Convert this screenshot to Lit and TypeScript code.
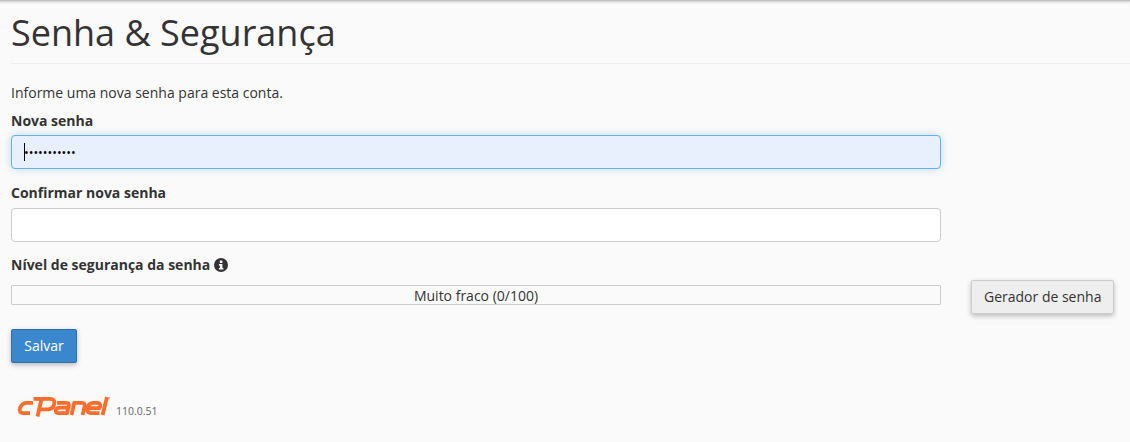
import { LitElement, html, css } from "lit";
import { customElement } from "lit/decorators.js";

@customElement("app-root")
export class AppRoot extends LitElement {
  static styles = css`
    :host {
      display: block;
      width: 1130px;
      height: 442px;
      overflow: hidden;
      background: #fafafa;
      color: #333;
      font-family: "Open Sans", sans-serif;
      font-size: 14px;
      line-height: 20px;
    }
    .page {
      height: 442px;
      box-sizing: border-box;
      padding: 0 0 0 11px;
      background: linear-gradient(#b4b4b4, #d8d8d8 1.5px, #f2f2f2 3px, #fafafa 5px);
    }
    h1 {
      margin: 0;
      padding: 11px 0 9px;
      height: 64px;
      box-sizing: border-box;
      font-size: 36px;
      line-height: 44px;
      font-weight: 400;
      border-bottom: 1px solid #eee;
    }
    .intro {
      margin: 19px 0 0;
    }
    .label {
      display: block;
      margin-top: 8px;
      font-weight: 700;
    }
    .field {
      position: relative;
      width: 930px;
      height: 34px;
      margin-top: 5px;
    }
    .field.first {
      margin-top: 4px;
    }
    input {
      display: block;
      width: 100%;
      height: 100%;
      box-sizing: border-box;
      padding: 6px 12px;
      border: 1px solid #ccc;
      border-radius: 4px;
      background: #fff;
      outline: none;
      font: 14px "Open Sans", sans-serif;
      color: #000;
    }
    input.focus {
      background: #e8f0fe;
      border-color: #66afe9;
      box-shadow: 0 0 8px rgba(102, 175, 233, 0.4);
      font-size: 12.5px;
    }
    .caret {
      position: absolute;
      left: 13px;
      top: 8px;
      width: 1px;
      height: 18px;
      background: #000;
    }
    .second {
      margin-top: 14px;
    }
    .third {
      margin-top: 13px;
    }
    .info {
      display: inline-block;
      vertical-align: -2px;
    }
    .strength {
      display: grid;
      grid-template-columns: 930px auto;
      column-gap: 30px;
      justify-content: start;
      align-items: start;
      height: 34px;
      margin-top: 5px;
    }
    .bar {
      box-sizing: border-box;
      height: 20px;
      margin-top: 5px;
      border: 1px solid #ccc;
      border-radius: 1px;
      background: #fafafa;
      text-align: center;
      line-height: 19px;
    }
    button {
      box-sizing: border-box;
      height: 34px;
      padding: 0 12px;
      border: 1px solid #ccc;
      border-radius: 2px;
      background: #eee;
      color: #333;
      font: 14px/20px "Open Sans", sans-serif;
      box-shadow: 0 2px 5px rgba(0, 0, 0, 0.26);
    }
    .save {
      display: block;
      width: 66px;
      padding: 0;
      margin-top: 15px;
      background: #3a87ce;
      border-color: #2f6fab;
      color: #fff;
    }
    footer {
      display: flex;
      align-items: flex-end;
      gap: 6px;
      margin: 33px 0 0 6px;
    }
    footer svg {
      display: block;
    }
    .ver {
      font-size: 10.5px;
      line-height: 14px;
      color: #666;
      margin-bottom: -1px;
    }
  `;

  render() {
    return html`
      <div class="page">
        <h1>Senha &amp; Segurança</h1>
        <p class="intro">Informe uma nova senha para esta conta.</p>
        <label class="label">Nova senha</label>
        <div class="field first">
          <input class="focus" type="password" .value=${"abcdefghijk"} />
          <span class="caret"></span>
        </div>
        <label class="label second">Confirmar nova senha</label>
        <div class="field"><input type="password" /></div>
        <label class="label third">
          Nível de segurança da senha
          <svg class="info" width="14" height="14" viewBox="0 0 14 14">
            <circle cx="7" cy="7" r="7" fill="#333" />
            <rect x="5.8" y="2.5" width="2.6" height="2.4" rx=".5" fill="#fafafa" />
            <path d="M4.9 6h3.5v4h1v1.6H4.9V10h1V7.6h-1z" fill="#fafafa" />
          </svg>
        </label>
        <div class="strength">
          <div class="bar">Muito fraco (0/100)</div>
          <button>Gerador de senha</button>
        </div>
        <button class="save">Salvar</button>
        <footer>
          <svg width="93" height="21" viewBox="0 0 93 21" fill="none" stroke="#ff6c2c" stroke-width="3.8" stroke-linejoin="round">
            <path d="M16 6.8H10Q5.2 6.8 3.2 11.5Q1.4 17.2 6.5 17.2H13" />
            <path d="M16.5 2.8H32.5Q38.5 2.8 37.2 8Q36 13.4 30 13.4H22.5M24.5 3L20.5 20.5" />
            <path d="M40 6.8H49Q52.5 6.8 51.8 10L50 17.2H42Q38.2 17.2 38.8 14Q39.6 11.6 43 11.6H51" />
            <path d="M54.5 19L57.2 6.8H65Q68.4 6.8 67.6 10.5L65.6 19" />
            <path d="M83.5 12.2H72M82.5 17.2H74Q69.5 17.2 70.5 12Q71.5 6.8 76.5 6.8H79.5Q84 6.8 83.2 10.5L82.6 12.2" />
            <path d="M90 1L85.6 19" />
            <circle cx="92" cy="2" r="1" fill="#ffa27c" stroke="none" />
          </svg>
          <span class="ver">110.0.51</span>
        </footer>
      </div>
    `;
  }
}
